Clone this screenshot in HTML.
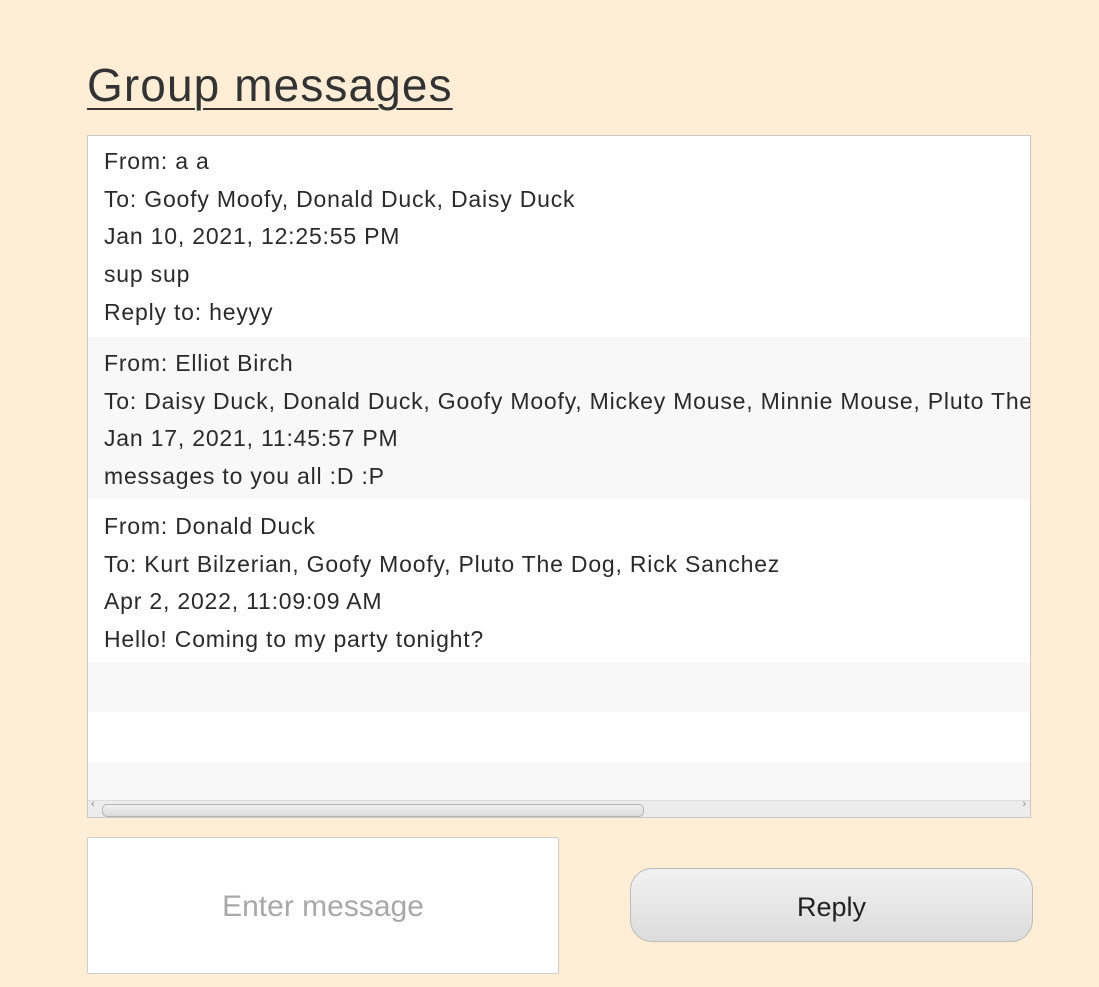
<!DOCTYPE html>
<html><head><style>
body{margin:0;width:1099px;height:987px;background:#FFEED5;font-family:"Liberation Sans",sans-serif;position:relative;overflow:hidden;color:#333}
h1{position:absolute;left:87px;top:58px;margin:0;font-weight:normal;font-size:46px;text-decoration:underline;text-decoration-thickness:2px;text-underline-offset:7px;color:#333;letter-spacing:1.1px}
.list{position:absolute;left:87px;top:135px;width:942px;height:681px;border:1px solid #c8c8c8;background:#fff;overflow:hidden}
.cell{position:absolute;left:0;width:942px;padding-left:16px;box-sizing:border-box;white-space:nowrap;font-size:23px;letter-spacing:0.8px;line-height:37.7px;color:#2a2a2a}
.g{background:#f8f8f8}
.sb{position:absolute;left:0;top:664px;width:942px;height:17px;background:#ececec;border-top:1px solid #ddd}
.thumb{position:absolute;left:14px;top:3px;width:540px;height:11px;border:1px solid #b5b5b5;border-radius:5px;background:linear-gradient(#f0f0f0,#dcdcdc)}
.ta{position:absolute;left:87px;top:837px;width:470px;height:135px;background:#fff;border:1px solid #ccc;border-radius:2px;font-size:30px;color:#a8a8a8;text-align:center;line-height:138px}
.btn{position:absolute;left:630px;top:868px;width:401px;height:72px;border:1px solid #bbb;border-radius:22px;background:linear-gradient(#f1f1f1,#dcdcdc);font-size:27px;text-align:center;line-height:76px;color:#222}
</style></head><body>
<h1>Group messages</h1>
<div class="list">
<div class="cell" style="top:7px;height:195px">From: a a<br>To: Goofy Moofy, Donald Duck, Daisy Duck<br>Jan 10, 2021, 12:25:55 PM<br>sup sup<br>Reply to: heyyy</div>
<div class="cell g" style="top:201px;height:162px;padding-top:8px">From: Elliot Birch<br>To: Daisy Duck, Donald Duck, Goofy Moofy, Mickey Mouse, Minnie Mouse, Pluto The Dog<br>Jan 17, 2021, 11:45:57 PM<br>messages to you all :D :P</div>
<div class="cell" style="top:363px;height:163px;padding-top:9px">From: Donald Duck<br>To: Kurt Bilzerian, Goofy Moofy, Pluto The Dog, Rick Sanchez<br>Apr 2, 2022, 11:09:09 AM<br>Hello! Coming to my party tonight?</div>
<div class="cell g" style="top:526px;height:50px"></div>
<div class="cell g" style="top:626px;height:40px"></div>
<div class="sb"><span style="position:absolute;left:3px;top:-3px;font-size:11px;color:#888">‹</span><div class="thumb"></div><span style="position:absolute;right:4px;top:-3px;font-size:11px;color:#888">›</span></div>
</div>
<div class="ta">Enter message</div>
<div class="btn">Reply</div>
</body></html>
